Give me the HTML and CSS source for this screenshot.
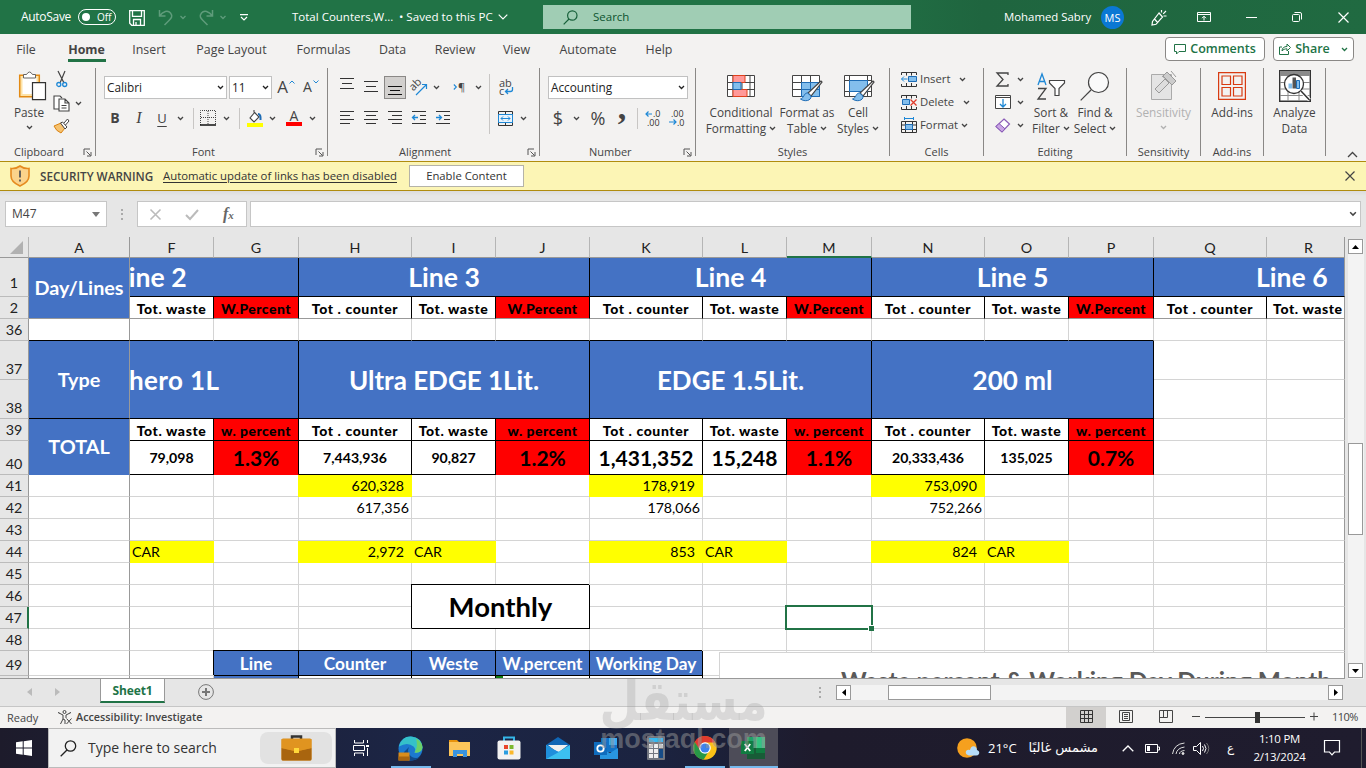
FILE: index.html
```html
<!DOCTYPE html>
<html lang="en">
<head>
    <meta charset="UTF-8">
    <meta name="viewport" content="width=device-width, initial-scale=1.0">
    <title>Total Counters - Excel</title>
    <link rel="stylesheet" href="styles.css">
</head>
<body>

<!-- shared icons -->
<svg class="defs" width="0" height="0">
    <symbol id="chev" viewBox="0 0 7 5"><path d="M1 1l2.500 2.500L6 1" fill="none" stroke="currentColor" stroke-width="1.300"/></symbol>
    <symbol id="launch" viewBox="0 0 9 9"><path d="M1 7V1h6M3.500 3.500l4 4M8 4v4H4" fill="none" stroke="#555" stroke-width="1"/></symbol>
    <symbol id="brush" viewBox="0 0 24 22"><path d="M22 1L9 13l3 3L23 2z" fill="#fff" stroke="#444" stroke-width="1.200"/><path d="M8.500 13c-4 0-3 5-7 6 4 3 11 2 10.500-3z" fill="#83beec" stroke="#1e6cb5"/></symbol>
</svg>

<header class="titlebar">
    <span class="autosave">AutoSave</span>
    <span class="toggle"><i></i>Off</span>
    <svg class="save" width="16" height="17" viewBox="0 0 16 17" fill="none" stroke="#fff" stroke-width="1.300"><path d="M.7 1.700h14.600v14.600H2.700l-2-2zM3.500 1.700v5.600h9V1.700M4.500 16v-5.500h7V16M7 16v-3"/></svg>
    <svg class="undo" width="16" height="17" viewBox="0 0 16 17" fill="none" stroke="#5f9c7b" stroke-width="1.500"><path d="M1.500 1v6h6M1.500 7C5 2 10 .8 12.500 4s1 5-1.500 7.500L6.500 16"/></svg>
    <svg class="dim" width="8" height="5"><use href="#chev"/></svg>
    <svg class="redo" width="16" height="17" viewBox="0 0 16 17" fill="none" stroke="#5f9c7b" stroke-width="1.500"><path d="M14.500 1v6h-6M14.500 7C11 2 6 .8 3.500 4s-1 5 1.500 7.500L9.500 16"/></svg>
    <svg class="dim" width="8" height="5"><use href="#chev"/></svg>
    <svg class="qat" width="8" height="7" viewBox="0 0 8 7" fill="none" stroke="#fff" stroke-width="1.200"><path d="M0 .7h8M1 3l3 3 3-3"/></svg>
    <span class="doc">Total Counters,W...</span>
    <span class="saved">• Saved to this PC</span>
    <svg class="docchev" width="10" height="6" viewBox="0 0 10 6"><path d="M.7 .7L5 5 9.300 .7" fill="none" stroke="#fff" stroke-width="1.200"/></svg>
    <div class="search">
        <svg width="15" height="15" viewBox="0 0 15 15" fill="none" stroke="#17603a" stroke-width="1.200"><circle cx="9.300" cy="5.500" r="4.700"/><path d="M6 9L.7 14.300"/></svg>
        <span>Search</span>
    </div>
    <div class="account">
        <span class="user">Mohamed Sabry</span>
        <span class="avatar">MS</span>
        <svg class="pen" width="16" height="17" viewBox="0 0 16 17" fill="none" stroke="#fff" stroke-width="1.200"><path d="M8 4L1.500 12.500 1 16l4-.7L11.500 8zM3.500 10l3.500 4M8 4l3.500 4M10.500 3.500V1M12.200 4.800L15 2M12.500 7H15.500"/></svg>
        <svg class="disp" width="14" height="12" viewBox="0 0 14 12" fill="none" stroke="#fff"><path d="M.5 1.500h13v9H.5zM.5 3.500h13M7 9.500v-4M5 7.200l2-2 2 2"/></svg>
        <svg class="min" width="11" height="11"><path d="M0 5.500h11" stroke="#fff"/></svg>
        <svg class="max" width="10" height="10" fill="none" stroke="#fff"><rect x=".5" y="2.500" width="7" height="7" rx="1"/><path d="M2.500 .5H8q1.500 0 1.500 1.500v5.500"/></svg>
        <svg class="cls" width="11" height="11"><path d="M.5 .5l10 10M10.500 .5l-10 10" stroke="#fff" stroke-width="1.200"/></svg>
    </div>
</header>

<nav class="tabs">
    <a>File</a><a class="on">Home</a><a>Insert</a><a>Page Layout</a><a>Formulas</a><a>Data</a><a>Review</a><a>View</a><a>Automate</a><a>Help</a>
    <div class="tab-actions">
        <button><svg width="12" height="11" viewBox="0 0 12 11" fill="none" stroke="#217346"><path d="M.5 .5h11v7H5l-2.500 2.500V7.500h-2z"/></svg>Comments</button>
        <button class="share"><svg width="12" height="12" viewBox="0 0 12 12" fill="none" stroke="#217346"><path d="M3 4H.5v7.500h9V8M3 8c0-3 2-4.500 5-4.500V1l3.500 3.500L8 8V5.800C6 5.800 4 6.500 3 8z"/></svg>Share<svg class="c" width="7" height="5"><use href="#chev"/></svg></button>
    </div>
</nav>

<section class="ribbon">
    <div class="group clipboard">
        <div class="gbody">
            <div class="big paste">
                <svg width="30" height="31" viewBox="0 0 30 31"><path d="M3.700 5.200h19.600v21.600H3.700z" fill="#fde3a8" stroke="#e38a13" stroke-width="1.500"/><path d="M6.500 8h14v16h-14z" fill="#fff"/><path d="M7.500 8V4.500h3q3-5 6 0h3V8z" fill="#fff" stroke="#666"/><path d="M16.500 12.600h13v17h-13z" fill="#fff" stroke="#333" stroke-width="1.200"/></svg>
                <span>Paste</span>
                <svg width="7" height="5"><use href="#chev"/></svg>
            </div>
            <div class="clipcol">
                <svg width="12" height="17" viewBox="0 0 12 17" fill="none"><path d="M2 0l6 12M9 0L4 12" stroke="#444" stroke-width="1.200"/><circle cx="2.800" cy="13.500" r="2" stroke="#1e88d6" stroke-width="1.300"/><circle cx="8.700" cy="13.500" r="2" stroke="#1e88d6" stroke-width="1.300"/></svg>
                <div class="copy"><svg width="17" height="17" viewBox="0 0 17 17" fill="#fff" stroke="#444" stroke-width="1.100"><path d="M6 14H1V1h6l2 2"/><path d="M6 4h6l4 4v8H6zM12 4v4h4M8.500 10.500h5M8.500 13h5"/></svg><svg width="7" height="5"><use href="#chev"/></svg></div>
                <svg width="17" height="16" viewBox="0 0 17 16"><path d="M1 8l7-3 4 5-4 5q-5-2-7-7z" fill="#f6c26f" stroke="#d98212"/><path d="M7.500 5l2-1 4.500 5-2 2zM11 5l3.500-4L16 3l-3.500 4" fill="#fff" stroke="#444"/></svg>
            </div>
        </div>
        <div class="glabel">Clipboard<svg width="9" height="9"><use href="#launch"/></svg></div>
    </div>

    <div class="group font">
        <div class="gbody rows">
            <div class="row">
                <div class="combo name">Calibri<svg width="7" height="5"><use href="#chev"/></svg></div>
                <div class="combo size">11<svg width="7" height="5"><use href="#chev"/></svg></div>
                <span class="i w28"><b class="grow">A</b><svg class="sup" width="6" height="4" viewBox="0 0 6 4"><path d="M.5 3.500L3 1l2.500 2.500" fill="none" stroke="#1e88d6"/></svg></span>
                <span class="i w22"><b class="shrink">A</b><svg class="sup" width="6" height="4" viewBox="0 0 6 4"><path d="M.5 .5L3 3 5.500 .5" fill="none" stroke="#1e88d6"/></svg></span>
            </div>
            <div class="row">
                <span class="i w22 bold">B</span><span class="i w26 ital">I</span><span class="i w20 und">U</span>
                <span class="i w16"><svg width="7" height="5"><use href="#chev"/></svg></span>
                <span class="i w10"><em class="vs"></em></span>
                <span class="i w20"><svg width="16" height="16" viewBox="0 0 16 16"><path d="M.5 15V.5h15V15M8 1v14M1 7.500h14" stroke="#444" fill="none" stroke-dasharray="1 1"/><path d="M0 15h16" stroke="#111" stroke-width="1.500"/></svg></span>
                <span class="i w16"><svg width="7" height="5"><use href="#chev"/></svg></span>
                <span class="i w10"><em class="vs"></em></span>
                <span class="i w21"><svg width="16" height="17" viewBox="0 0 16 17"><path d="M8 2L3 8l4 4 5-5-5-5V0" fill="#fff" stroke="#444" stroke-width="1.100"/><path d="M11 4q3 0 2.500 6" stroke="#1e6cb5" stroke-width="2" fill="none"/><path d="M0 13h16v4H0z" fill="#ff0"/></svg></span>
                <span class="i w14"><svg width="7" height="5"><use href="#chev"/></svg></span>
                <span class="i w30 fcol">A<s></s></span>
                <span class="i w6"><svg width="7" height="5"><use href="#chev"/></svg></span>
            </div>
        </div>
        <div class="glabel">Font<svg width="9" height="9"><use href="#launch"/></svg></div>
    </div>

    <div class="group align">
        <div class="gbody">
            <div class="rows">
                <div class="row">
                    <span class="i w24 high"><svg width="14" height="12" stroke="#333"><path d="M0 .5h14M2 5.500h10M0 10.500h14"/></svg></span>
                    <span class="i w24"><svg width="14" height="12" stroke="#333"><path d="M0 .5h14M2 5.500h10M0 10.500h14"/></svg></span>
                    <span class="i w24"><span class="pressed"><svg width="14" height="12" stroke="#111"><path d="M0 1.500h14M2 5.500h10M0 9.500h14"/></svg></span></span>
                    <span class="i w24"><svg width="18" height="17" viewBox="0 0 18 17"><text x="1" y="11" font-size="11" fill="#444" transform="rotate(-45 4 9)">ab</text><path d="M6 16L16.500 5.500M16.500 10V5.500H12" stroke="#1e88d6" stroke-width="1.200" fill="none"/></svg></span>
                    <span class="i w10"><svg width="7" height="5"><use href="#chev"/></svg></span>
                    <span class="i w32 pil"><svg width="5" height="8" viewBox="0 0 6 8"><path d="M1 1l3 3-3 3" fill="none" stroke="#1e88d6" stroke-width="1.300"/></svg>¶</span>
                    <span class="i w10"><svg width="7" height="5"><use href="#chev"/></svg></span>
                </div>
                <div class="row">
                    <span class="i w24"><svg width="14" height="14" stroke="#333"><path d="M0 .5h14M0 4.500h10M0 8.500h14M0 12.500h10"/></svg></span>
                    <span class="i w24"><svg width="14" height="14" stroke="#333"><path d="M0 .5h14M2 4.500h10M0 8.500h14M2 12.500h10"/></svg></span>
                    <span class="i w24"><svg width="14" height="14" stroke="#333"><path d="M0 .5h14M4 4.500h10M0 8.500h14M4 12.500h10"/></svg></span>
                    <span class="i w24"><svg width="14" height="14" stroke="#333" fill="none"><path d="M0 .5h14M8 4.500h6M8 8.500h6M0 12.500h14"/><path d="M6 6.500H.5M3 4L.5 6.500 3 9" stroke="#1e88d6" stroke-width="1.300"/></svg></span>
                    <span class="i w24"><svg width="14" height="14" stroke="#333" fill="none"><path d="M0 .5h14M8 4.500h6M8 8.500h6M0 12.500h14"/><path d="M0 6.500h5.500M3 4l2.500 2.500L3 9" stroke="#1e88d6" stroke-width="1.300"/></svg></span>
                </div>
            </div>
            <em class="vs tall"></em>
            <div class="rows">
                <div class="row"><span class="i w32"><svg width="15" height="17" viewBox="0 0 15 17"><text x="0" y="8" font-size="11" fill="#444">ab</text><text x="0" y="16" font-size="11" fill="#444">c</text><path d="M13.500 8v2.500q0 2-2 2H6.500M9 10l-2.500 2.500L9 15" stroke="#1e88d6" stroke-width="1.300" fill="none"/></svg></span></div>
                <div class="row"><span class="i w30"><svg width="15" height="15" viewBox="0 0 15 15" fill="none" stroke="#333"><path d="M.5 .5h14v14H.5zM7.500 .5v14"/><path d="M.5 3.500h14v8H.5z" fill="#e8f3fc" stroke="#1e88d6"/><path d="M3 7.500h9M5 5.500l-2 2 2 2M10 5.500l2 2-2 2" stroke="#1e88d6"/></svg></span><span class="i w6"><svg width="7" height="5"><use href="#chev"/></svg></span></div>
            </div>
        </div>
        <div class="glabel">Alignment<svg width="9" height="9"><use href="#launch"/></svg></div>
    </div>

    <div class="group number">
        <div class="gbody rows">
            <div class="row"><div class="combo acc">Accounting<svg width="7" height="5"><use href="#chev"/></svg></div></div>
            <div class="row">
                <span class="i w20 big1">$</span><span class="i w16"><svg width="7" height="5"><use href="#chev"/></svg></span>
                <span class="i w28 big1">%</span><span class="i w20 comma">,</span><span class="i w10"><em class="vs"></em></span>
                <span class="i w24 dec"><svg width="16" height="16" viewBox="0 0 16 16"><text x="8" y="7" font-size="9" fill="#333">.0</text><text x="2" y="15.500" font-size="9" fill="#333">.00</text><path d="M7 4H1M3.500 1.500L1 4l2.500 2.500" stroke="#1e88d6" stroke-width="1.200" fill="none"/></svg></span>
                <span class="i w24 dec"><svg width="16" height="16" viewBox="0 0 16 16"><text x="2" y="7" font-size="9" fill="#333">.00</text><text x="8" y="15.500" font-size="9" fill="#333">.0</text><path d="M0 12h7M4.500 9.500L7 12l-2.500 2.500" stroke="#1e88d6" stroke-width="1.200" fill="none"/></svg></span>
            </div>
        </div>
        <div class="glabel">Number<svg width="9" height="9"><use href="#launch"/></svg></div>
    </div>

    <div class="group styles">
        <div class="gbody">
            <div class="big w90"><svg width="28" height="26" viewBox="0 0 28 26"><path d="M.5 3.500h27v21H.5zM.5 10.500h27M.5 17.500h27M6 3.500v21M15 3.500v21M23 3.500v21" fill="#fff" stroke="#444"/><path d="M6 3.500h12v7H6zM6 17.500h14v7H6z" fill="#f99" stroke="#e0401c"/><path d="M6 10.500h8v7H6z" fill="#83beec" stroke="#1e6cb5"/></svg><span>Conditional<br>Formatting <svg width="7" height="5"><use href="#chev"/></svg></span></div>
            <div class="big w42"><svg width="32" height="30" viewBox="0 0 32 30"><path d="M1.500 4.500h27v21h-27zM1.500 11.500h27M1.500 18.500h27M10.500 4.500v21M19.500 4.500v21" fill="#fff" stroke="#444"/><path d="M10.500 11.500h18v14h-18z" fill="#83beec" stroke="#1e6cb5"/><path d="M19.500 11.500v14M10.500 18.500h18" stroke="#1e6cb5"/><use href="#brush" x="8" y="9" width="24" height="22"/></svg><span>Format as<br>Table <svg width="7" height="5"><use href="#chev"/></svg></span></div>
            <div class="big w60"><svg width="32" height="30" viewBox="0 0 32 30"><path d="M1.500 4.500h27v21h-27zM1.500 9.500h27M6.500 4.500v21M24.500 4.500v21M1.500 20.500h27" fill="#fff" stroke="#444"/><path d="M6.500 9.500h18v11h-18z" fill="#83beec" stroke="#1e6cb5"/><use href="#brush" x="8" y="9" width="24" height="22"/></svg><span>Cell<br>Styles <svg width="7" height="5"><use href="#chev"/></svg></span></div>
        </div>
        <div class="glabel">Styles</div>
    </div>

    <div class="group cells">
        <div class="gbody cellcol">
            <div><svg width="16" height="15" viewBox="0 0 16 15" fill="none" stroke="#333"><path d="M.5 3V.5h15V3M.5 12v2.500h15V12M5.500 .5v3M10.500 .5v3M5.500 11v3.500M10.500 11v3.500"/><path d="M7.500 4.500h8v5h-8z" fill="#83beec" stroke="#1e6cb5"/><path d="M6.500 7H.5M3 4.500L.5 7 3 9.500" stroke="#1e88d6"/></svg><span>Insert</span><svg width="7" height="5"><use href="#chev"/></svg></div>
            <div><svg width="16" height="15" viewBox="0 0 16 15" fill="none" stroke="#333"><path d="M.5 3V.5h15V3M.5 12v2.500h15V12M5.500 .5v3M10.500 .5v3M5.500 11v3.500M10.500 11v3.500"/><path d="M1.500 4.500h7v5h-7z" fill="#83beec" stroke="#1e6cb5"/><path d="M9.500 4.500l6 6M15.500 4.500l-6 6" stroke="#e03a2a" stroke-width="1.300"/></svg><span>Delete</span><svg width="7" height="5"><use href="#chev"/></svg></div>
            <div><svg width="16" height="16" viewBox="0 0 16 16" fill="none" stroke="#333"><path d="M.5 4.500h15v11H.5zM.5 8h15M.5 12.500h15M4.500 4.500v11M11.500 4.500v11"/><path d="M4.500 7.500h7v5h-7z" fill="#83beec" stroke="#1e6cb5"/><path d="M3.500 1.500h9M3.500 0v3M12.500 0v3" stroke="#1e88d6"/></svg><span>Format</span><svg width="7" height="5"><use href="#chev"/></svg></div>
        </div>
        <div class="glabel">Cells</div>
    </div>

    <div class="group editing">
        <div class="gbody">
            <div class="edcol">
                <div><svg width="15" height="15" viewBox="0 0 15 15" fill="none" stroke="#444" stroke-width="1.300"><path d="M13 3V1H2l6 6.500L2 14h11v-2"/></svg><svg width="7" height="5"><use href="#chev"/></svg></div>
                <div><svg width="16" height="14" viewBox="0 0 16 14" fill="#fff" stroke="#444"><path d="M.5 .5h15v13H.5zM.5 2.500h15"/><path d="M8 4v7.500M5 9l3 3 3-3" stroke="#1e88d6" stroke-width="1.300" fill="none"/></svg><svg width="7" height="5"><use href="#chev"/></svg></div>
                <div><svg width="16" height="15" viewBox="0 0 16 15"><path d="M9 1l5.500 5L7 14 1 8.500z" fill="#fff" stroke="#8a5cb8" stroke-width="1.200"/><path d="M4 5.500l6 5.300L7 14 1 8.500z" fill="#c9a6e4" stroke="#8a5cb8"/></svg><svg width="7" height="5"><use href="#chev"/></svg></div>
            </div>
            <div class="big w42"><svg width="30" height="30" viewBox="0 0 30 30" fill="none"><path d="M2 14L6 3l4 11M3.500 10.500h5" stroke="#1e88d6" stroke-width="1.300"/><path d="M2 17.500h8l-8 10.500h8" stroke="#444" stroke-width="1.300"/><path d="M13.500 9.500h15v2.500l-5.500 5.500v7h-4v-7L13.500 12z" fill="#fff" stroke="#444" stroke-width="1.200"/></svg><span>Sort &amp;<br>Filter <svg width="7" height="5"><use href="#chev"/></svg></span></div>
            <div class="big w46"><svg width="30" height="30" viewBox="0 0 30 30" fill="none" stroke="#444" stroke-width="1.200"><circle cx="18.500" cy="11.500" r="10" fill="#fafafa"/><path d="M11 19L.7 29.300"/></svg><span>Find &amp;<br>Select <svg width="7" height="5"><use href="#chev"/></svg></span></div>
        </div>
        <div class="glabel">Editing</div>
    </div>

    <div class="group sens">
        <div class="gbody"><div class="big full grey"><svg width="28" height="30" viewBox="0 0 28 30"><path d="M1.500 4.500h20v25h-20z" fill="#e4e4e4" stroke="#aaa"/><path d="M5 19L15 9l4 4L9 23z" fill="#ddd" stroke="#999"/><path d="M13 6l4-4 9 9-4 4zM16 9l-4-3M21 1l5 6" fill="#ccc" stroke="#999"/></svg><span>Sensitivity</span><svg width="7" height="5"><use href="#chev"/></svg></div></div>
        <div class="glabel">Sensitivity</div>
    </div>
    <div class="group addins">
        <div class="gbody"><div class="big full"><svg width="28" height="29" viewBox="0 0 28 29" fill="none" stroke="#d83b12" stroke-width="1.200"><path d="M.6 1.600h26.800v26.800H.6zM4 5h8.500v8.500H4zM15.500 5H24v8.500h-8.500zM4 16.500h8.500V25H4zM15.500 16.500H24V25h-8.500z"/></svg><span>Add-ins</span></div></div>
        <div class="glabel">Add-ins</div>
    </div>
    <div class="group analyze">
        <div class="gbody"><div class="big full"><svg width="32" height="32" viewBox="0 0 32 32"><path d="M.7 .7h30.600v30.600H.7z" fill="#fff" stroke="#333" stroke-width="1.400"/><path d="M1 1h30v5H1z" fill="#8a8a8a"/><path d="M1 12.500h30M1 19h30M1 25.500h30M9 6v25M20 6v25" stroke="#888"/><circle cx="15" cy="14" r="9.500" fill="#fff" stroke="#333" stroke-width="1.300"/><path d="M9.500 13.500h3.500v5H9.500z" fill="#83beec"/><path d="M13.500 7.500h3.500v11h-3.500z" fill="#555"/><path d="M17.500 10.500h3v8h-3z" fill="#83beec" stroke="#1e6cb5"/><path d="M22 21l8.500 9" stroke="#fff" stroke-width="3.500"/><path d="M22 21l8.500 9" stroke="#333" stroke-width="1.500"/></svg><span>Analyze<br>Data</span></div></div>
    </div>
    <svg class="collapse" width="11" height="7" viewBox="0 0 11 7"><path d="M1 6l4.500-4.500L10 6" fill="none" stroke="#444" stroke-width="1.300"/></svg>
</section>

<div class="warning">
    <svg width="20" height="22" viewBox="0 0 20 22"><path d="M10 1q4 3 9 2.500V11q0 6-9 10Q1 17 1 11V3.500Q6 4 10 1z" fill="#fbd38b" stroke="#e58a1f" stroke-width="1.600"/><path d="M10 5.500v7M10 14.500v2" stroke="#555" stroke-width="1.800"/></svg>
    <strong>SECURITY WARNING</strong>
    <u>Automatic update of links has been disabled</u>
    <button>Enable Content</button>
    <svg class="x" width="10" height="10"><path d="M.5 .5l9 9M9.500 .5l-9 9" stroke="#444" stroke-width="1.200"/></svg>
</div>

<div class="formula">
    <div class="namebox">M47<svg width="8" height="5"><path d="M0 0h8L4 5z" fill="#777"/></svg></div>
    <svg class="dots" width="3" height="11" fill="#aaa"><path d="M0 0h2v2H0zM0 4h2v2H0zM0 9h2v2H0z"/></svg>
    <div class="fx">
        <svg width="11" height="11"><path d="M.5 .5l10 10M10.500 .5l-10 10" stroke="#bbb" stroke-width="1.600"/></svg>
        <svg width="14" height="11"><path d="M1 6l4 4 8-9" stroke="#bbb" stroke-width="2" fill="none"/></svg>
        <span>f<small>x</small></span>
    </div>
    <div class="finput"><svg width="8" height="6"><use href="#chev"/></svg></div>
</div>

<main class="work">
    <div class="sheet">
        <table>
            <colgroup><col class="c0"><col class="ca"><col class="c84"><col class="c85"><col class="c113"><col class="c84"><col class="c94"><col class="c113"><col class="c84"><col class="c85"><col class="c113"><col class="c84"><col class="c85"><col class="c113"><col class="c78"></colgroup>
            <tr class="head"><th class="corner"><svg width="13" height="13"><path d="M13 0v13H0z" fill="#b1b1b1"/></svg></th><th class="a">A</th><th>F</th><th>G</th><th>H</th><th>I</th><th>J</th><th>K</th><th>L</th><th class="cur">M</th><th>N</th><th>O</th><th>P</th><th>Q</th><th>R</th></tr>
            <tr class="h39 r1st"><th>1</th><td class="a blue f20 frz" rowspan="2">Day/Lines</td><td colspan="2" class="blue f27 cut"><span class="line2">Line 2</span></td><td colspan="3" class="blue f27">Line 3</td><td colspan="3" class="blue f27">Line 4</td><td colspan="3" class="blue f27">Line 5</td><td colspan="2" class="blue f27 line6">Line 6</td></tr>
            <tr class="h22 frzrow"><th>2</th><td class="k">Tot. waste</td><td class="k red">W.Percent</td><td class="k">Tot . counter</td><td class="k">Tot. waste</td><td class="k red">W.Percent</td><td class="k">Tot . counter</td><td class="k">Tot. waste</td><td class="k red">W.Percent</td><td class="k">Tot . counter</td><td class="k">Tot. waste</td><td class="k red">W.Percent</td><td class="k">Tot . counter</td><td class="k cut last">Tot. waste</td></tr>
            <tr class="h22 above"><th>36</th><td class="a"></td><td></td><td></td><td></td><td></td><td></td><td></td><td></td><td></td><td></td><td></td><td></td><td class="n"></td><td class="n"></td></tr>
            <tr class="h39"><th>37</th><td class="a blue f20" rowspan="2">Type</td><td colspan="2" rowspan="2" class="blue f27 cut"><span class="hero">hero 1L</span></td><td colspan="3" rowspan="2" class="blue f27">Ultra EDGE 1Lit.</td><td colspan="3" rowspan="2" class="blue f27">EDGE 1.5Lit.</td><td colspan="3" rowspan="2" class="blue f27">200 ml</td><td></td><td></td></tr>
            <tr class="h39"><th>38</th><td></td><td></td></tr>
            <tr class="h22"><th>39</th><td class="a blue f20 total" rowspan="2">TOTAL</td><td class="k">Tot. waste</td><td class="k red">w. percent</td><td class="k">Tot . counter</td><td class="k">Tot. waste</td><td class="k red">w. percent</td><td class="k">Tot . counter</td><td class="k">Tot. waste</td><td class="k red">w. percent</td><td class="k">Tot . counter</td><td class="k">Tot. waste</td><td class="k red">w. percent</td><td></td><td></td></tr>
            <tr class="h34"><th>40</th><td class="v">79,098</td><td class="p red">1.3%</td><td class="v">7,443,936</td><td class="v">90,827</td><td class="p red">1.2%</td><td class="p">1,431,352</td><td class="p">15,248</td><td class="p red">1.1%</td><td class="v">20,333,436</td><td class="v">135,025</td><td class="p red">0.7%</td><td></td><td></td></tr>
            <tr class="h22"><th>41</th><td class="a"></td><td></td><td></td><td class="y r">620,328</td><td></td><td></td><td class="y r">178,919</td><td></td><td></td><td class="y r">753,090</td><td></td><td></td><td></td><td></td></tr>
            <tr class="h22"><th>42</th><td class="a"></td><td></td><td></td><td class="r r1">617,356</td><td></td><td></td><td class="r r1">178,066</td><td></td><td></td><td class="r r1">752,266</td><td></td><td></td><td></td><td></td></tr>
            <tr class="h22"><th>43</th><td class="a"></td><td></td><td></td><td></td><td></td><td></td><td></td><td></td><td></td><td></td><td></td><td></td><td></td><td></td></tr>
            <tr class="h22"><th>44</th><td class="a"></td><td class="y l first">CAR</td><td></td><td class="y r">2,972</td><td class="y l">CAR</td><td></td><td class="y r">853</td><td class="y l">CAR</td><td></td><td class="y r">824</td><td class="y l">CAR</td><td></td><td></td><td></td></tr>
            <tr class="h22"><th>45</th><td class="a"></td><td></td><td></td><td></td><td></td><td></td><td></td><td></td><td></td><td></td><td></td><td></td><td></td><td></td></tr>
            <tr class="h22"><th>46</th><td class="a"></td><td></td><td></td><td class="m"></td><td class="monthly" colspan="2" rowspan="2">Monthly</td><td></td><td></td><td></td><td></td><td></td><td></td><td></td><td></td></tr>
            <tr class="h22"><th class="currow">47</th><td class="a"></td><td></td><td></td><td class="m"></td><td></td><td></td><td></td><td></td><td></td><td></td><td></td><td></td></tr>
            <tr class="h22"><th>48</th><td class="a"></td><td></td><td></td><td></td><td></td><td></td><td></td><td></td><td></td><td></td><td></td><td></td><td></td><td></td></tr>
            <tr class="h25"><th>49</th><td class="a"></td><td></td><td class="mh">Line</td><td class="mh">Counter</td><td class="mh">Weste</td><td class="mh">W.percent</td><td class="mh">Working Day</td><td></td><td></td><td></td><td></td><td></td><td></td><td></td></tr>
            <tr class="h9"><th></th><td class="a"></td><td></td><td class="blue"></td><td class="m"></td><td class="m"></td><td class="m flag"></td><td class="m"></td><td></td><td></td><td></td><td></td><td></td><td></td><td></td></tr>
        </table>
        <div class="selection"><i></i></div>
        <div class="chart">Waste percent &amp; Working Day During Month</div>
    </div>
    <div class="vscroll">
        <b><svg width="7" height="4"><path d="M0 4h7L3.500 0z"/></svg></b>
        <i></i>
        <b><svg width="7" height="4"><path d="M0 0h7L3.500 4z"/></svg></b>
    </div>
</main>

<div class="sheettabs">
    <svg class="nav1" width="5" height="8"><path d="M5 0v8L0 4z" fill="#bbb"/></svg>
    <svg class="nav2" width="5" height="8"><path d="M0 0v8l5-4z" fill="#bbb"/></svg>
    <span class="tab">Sheet1</span>
    <svg class="plus" width="16" height="16" fill="none" stroke="#777"><circle cx="8" cy="8" r="7.400"/><path d="M4 8h8M8 4v8" stroke-width="2"/></svg>
    <div class="hscroll">
        <svg class="dots" width="3" height="11" fill="#aaa"><path d="M0 0h2v2H0zM0 4h2v2H0zM0 9h2v2H0z"/></svg>
        <b><svg width="4" height="7"><path d="M4 0v7L0 3.500z"/></svg></b>
        <div class="track"><i></i></div>
        <b><svg width="4" height="7"><path d="M0 0v7l4-3.500z"/></svg></b>
    </div>
</div>

<footer class="status">
    <span class="ready">Ready</span>
    <svg width="15" height="15" viewBox="0 0 15 15" fill="none" stroke="#444"><circle cx="6.500" cy="2" r="1.500"/><path d="M1 3l4 2v4l-2.500 5M12 3L8 5v3M1 3.500L.5 2M12.500 2L12 3.500M8.500 8.500l5 5.500M13.500 8.500l-5 5.500M5 9l2 1v4"/></svg>
    <strong>Accessibility: Investigate</strong>
    <div class="views">
        <span class="vw on"><svg width="13" height="13" fill="none" stroke="#333"><path d="M.5 .5h12v12H.5zM.5 4.500h12M.5 8.500h12M4.500 .5v12M8.500 .5v12"/></svg></span>
        <span class="vw"><svg width="14" height="13" fill="none" stroke="#444"><path d="M.5 .5h13v12H.5zM3.500 2.500h7v8h-7zM5 4.500h4M5 6.500h4M5 8.500h4"/></svg></span>
        <span class="vw"><svg width="14" height="13" fill="none" stroke="#444"><path d="M.5 .5h13v12H.5zM.5 7.500h8v-7M4.500 .5v7"/></svg></span>
        <svg class="slider" width="128" height="13" stroke="#444" fill="none"><path d="M0 6.500h8M13 7.500h100M118 6.500h8M122 2.500v8"/><path d="M63 2h5v11h-5z" fill="#333" stroke="none"/></svg>
        <span class="zoom">110%</span>
    </div>
</footer>

<div class="taskbar">
    <svg class="win" width="16" height="16" fill="#fff"><path d="M0 2.300L6.700 1.300V7.500H0zM7.700 1.200L16 0v7.500H7.700zM0 8.500h6.700v6.200L0 13.700zM7.700 8.500H16V16l-8.300-1.200z"/></svg>
    <div class="tsearch">
        <svg width="17" height="17" viewBox="0 0 17 17" fill="none" stroke="#222" stroke-width="1.300"><circle cx="10.500" cy="6" r="5.200"/><path d="M7 10L.7 16.300"/></svg>
        <span>Type here to search</span>
        <div class="case"><svg width="31" height="26" viewBox="0 0 31 26"><path d="M11 4V1.500h9V4" fill="none" stroke="#333" stroke-width="2.500"/><rect x=".5" y="3.500" width="30" height="22" rx="1.500" fill="#d98d1c"/><path d="M.5 13l13 3h4l13-3v11q0 1.500-1.500 1.500h-27Q.5 25.500 .5 24z" fill="#a9650f"/><path d="M.5 4h30v9l-13 3h-4L.5 13z" fill="#e09420"/><path d="M13 13h5v5h-5z" fill="#ffd83a"/></svg></div>
    </div>
    <span class="app tv"><svg width="17" height="16" fill="none" stroke="#fff"><path d="M1.500 0v3h9V0M1.500 16v-3h9v3M.5 5.500h11v5H.5zM14.500 0v3M14.500 8v8"/><path d="M13 5h3v2h-3z" fill="#fff" stroke="none"/></svg></span>
    <span class="app run edge"><svg width="25" height="25" viewBox="0 0 25 25"><circle cx="12.500" cy="12.500" r="12" fill="#1c79cf"/><path d="M1 10Q4 0 13 .5q11 1 11.500 11-1 6-8 5 2-3-1-6-6-5-14.500 0z" fill="#35c1c9"/><path d="M18 2.500q6 3 6.500 9-1 6-8 5 4-6 1.500-14z" fill="#6bd06a"/><path d="M11 11q-3 6 3 10 4 2 8 0-4 4-10 3.500Q5 22 6 16z" fill="#114a8b"/><path d="M.5 16.500h11v8H.5z" fill="#d98d1c"/><path d="M.5 20.500h11v4H.5z" fill="#a9650f"/></svg></span>
    <span class="app"><svg width="22" height="19" viewBox="0 0 22 19"><path d="M0 1h8l2 2H0z" fill="#e8930c"/><path d="M0 3h21v14H0z" fill="#fcc55a"/><path d="M4 18v-7h14v7h-4v-3H8v3z" fill="#3b93dd"/></svg></span>
    <span class="app"><svg width="24" height="24" viewBox="0 0 24 24"><path d="M7 6V1.500h10V6" fill="none" stroke="#35b5e8" stroke-width="2"/><rect x=".5" y="4.500" width="23" height="19" rx="2" fill="#f2f2f2"/><path d="M7 9h4v4H7z" fill="#e8452c"/><path d="M12.500 9h4v4h-4z" fill="#7cb82f"/><path d="M7 14.500h4v4H7z" fill="#2a9de0"/><path d="M12.500 14.500h4v4h-4z" fill="#fbb92b"/></svg></span>
    <span class="app"><svg width="24" height="22" viewBox="0 0 24 22"><path d="M0 8l12-8 12 8v3H0z" fill="#1066b5"/><path d="M2 8h20l-10 8z" fill="#f0f0f0"/><path d="M0 8l24 14H0z" fill="#2aa4e8"/><path d="M24 8v14H0z" fill="#3cc0f0"/><path d="M0 9l13 6L0 22z" fill="#1f8fdc"/></svg></span>
    <span class="app"><svg width="25" height="23" viewBox="0 0 25 23"><path d="M7 1h16v14H7z" fill="#1173c7"/><path d="M15 1h8v7h-8z" fill="#3aaaf0"/><path d="M6 11l10 5 8-5v11H6z" fill="#2996e0"/><path d="M0 5h13v13H0z" fill="#0f6cbd"/><circle cx="6.500" cy="11.500" r="3.200" fill="none" stroke="#fff" stroke-width="1.800"/></svg></span>
    <span class="app"><svg width="18" height="24" viewBox="0 0 18 24"><rect width="18" height="24" rx="1" fill="#737780"/><path d="M2 2h14v4H2z" fill="#36b8f0"/><path d="M2 8h4v4H2zM7 8h4v4H7zM12 8h4v4h-4zM2 13h4v4H2zM7 13h4v4H7zM2 18h4v4H2zM7 18h4v4H7z" fill="#eee"/><path d="M12 13h4v9h-4z" fill="#174c87"/></svg></span>
    <span class="app run"><svg width="24" height="24" viewBox="0 0 24 24"><circle cx="12" cy="12" r="11.700" fill="#fbc116"/><path d="M1.700 6A11.700 11.700 0 0 1 22.300 6.500H12L6.500 14.500z" fill="#e23b2e"/><path d="M1.700 6a11.700 11.700 0 0 0 9 17.600L16.500 14H7z" fill="#279847"/><circle cx="12" cy="12" r="5.800" fill="#fff"/><circle cx="12" cy="12" r="4.600" fill="#3b82ee"/></svg></span>
    <span class="app run excel"><svg width="25" height="22" viewBox="0 0 25 22"><path d="M6 0h18v22H6z" fill="#21a366"/><path d="M15 0h9v11h-9z" fill="#33c481"/><path d="M6 11h18v11H6z" fill="#185c37"/><path d="M15 11h9v5h-9z" fill="#107c41"/><path d="M0 4h13v13H0z" fill="#107c41"/><path d="M3.800 7l5.400 7M9.200 7l-5.400 7" stroke="#fff" stroke-width="1.800"/></svg></span>
    <div class="tray">
        <svg class="sun" width="23" height="21" viewBox="0 0 23 21"><circle cx="10" cy="10" r="9.800" fill="#f5a01e"/><path d="M11 17q-3-1-2-4 2-2 4-1 1-5 5-3.500 2 1 2 3.500 3 1 2 4-1 1.500-3 1.500h-6q-1.500 0-2-.5z" fill="#b5dcf8"/></svg>
        <span class="temp">21°C</span>
        <span class="ar" dir="rtl">مشمس غالبًا</span>
        <svg class="up" width="12" height="7"><path d="M.7 6.300L6 1l5.300 5.300" fill="none" stroke="#fff" stroke-width="1.300"/></svg>
        <svg class="bat" width="15" height="9"><path d="M.5 .5h12v8H.5zM13 3h1.500v3H13" fill="none" stroke="#fff"/><path d="M2 2h3v5H2z" fill="#fff"/></svg>
        <svg class="wifi" width="13" height="13" fill="none" stroke="#ddd"><path d="M.5 12Q2 2 12.500 1M4 12q1-6 8.500-7M7.500 12q0-3 5-3.500"/><circle cx="11" cy="11.500" r="1" fill="#fff"/></svg>
        <svg class="vol" width="16" height="13" fill="none" stroke="#fff"><path d="M.5 4.500h3l4-4v12l-4-4h-3zM9.500 4q2 2.500 0 5M11.500 2.500q3 4 0 8"/><path d="M13.500 1q4.500 5.500 0 11" stroke="#777"/></svg>
        <span class="ain">ع</span>
        <span class="clock">1:10 PM<br>2/13/2024</span>
        <svg class="note" width="16" height="16"><path d="M.5 .5h15v11.500h-5L8 14.800 5.500 12h-5z" fill="none" stroke="#fff" stroke-width="1.200"/></svg>
    </div>
</div>

<div class="watermark"><b lang="ar">مستقل</b><span>mostaql.com</span></div>

</body>
</html>
```
FILE: styles.css
```css
* {
    box-sizing: border-box;
}

body {
    margin: 0;
    width: 1366px;
    height: 768px;
    overflow: hidden;
    position: relative;
    font-family: "Open Sans", "Noto Sans", sans-serif;
    font-size: 12px;
    line-height: 16px;
    color: #444;
    background: #e6e6e6;
    white-space: nowrap;
}

svg {
    flex: none;
    overflow: visible;
}

.defs {
    position: absolute;
}

i, em, s {
    font-style: normal;
    text-decoration: none;
}

button {
    font: inherit;
}

/* title bar */
.titlebar {
    height: 34px;
    display: flex;
    align-items: center;
    background: linear-gradient(90deg, #217346 60%, #1f653f 72%, #206a41 100%);
    color: #fff;
}

.autosave {
    margin-left: 21px;
    width: 57px;
    letter-spacing: -0.3px;
}

.toggle {
    width: 38px;
    height: 16px;
    border: 1.5px solid #fff;
    border-radius: 8px;
    display: flex;
    align-items: center;
    font-size: 10px;
    line-height: 12px;
}

.toggle i {
    width: 8px;
    height: 8px;
    border-radius: 50%;
    background: #fff;
    margin: 0 7px 0 3px;
}

.save { margin-left: 13px; }
.undo { margin-left: 13px; }
.redo { margin-left: 11px; }
.dim { color: #5f9c7b; margin-left: 5px; }
.qat { margin-left: 13px; }
.doc { margin-left: 44px; width: 107px; font-size: 11.5px; }
.saved { font-size: 11.6px; width: 97px; }
.docchev { margin-left: 2px; }

.search {
    width: 368px;
    height: 24px;
    margin-left: 35px;
    background: #a0cdb4;
    color: #0d5430;
    display: flex;
    align-items: center;
    padding-left: 20px;
}

.search span {
    margin-left: 15px;
    font-size: 11.5px;
}

.account {
    display: flex;
    align-items: center;
    margin-left: 93px;
}

.user { width: 97px; font-size: 11.4px; }

.avatar {
    width: 23px;
    height: 23px;
    border-radius: 50%;
    background: #0a78d4;
    text-align: center;
    font-size: 11px;
    line-height: 23px;
}

.pen { margin-left: 27px; }
.disp { margin-left: 30px; }
.min { margin-left: 35px; }
.max { margin-left: 35px; }
.cls { margin-left: 36px; }

/* ribbon tabs */
.tabs {
    height: 34px;
    display: flex;
    background: #f3f2f1;
}

.tabs a {
    width: 60px;
    text-align: center;
    font-size: 12.4px;
    line-height: 31px;
}

.tabs a:nth-child(1) { width: 52px; }
.tabs a:nth-child(2) { width: 69px; }
.tabs a:nth-child(3) { width: 56px; }
.tabs a:nth-child(4) { width: 109px; }
.tabs a:nth-child(5) { width: 75px; }
.tabs a:nth-child(6) { width: 63px; }
.tabs a:nth-child(7) { width: 62px; }
.tabs a:nth-child(8) { width: 61px; }
.tabs a:nth-child(9) { width: 82px; }

.tabs .on {
    font-weight: 700;
    background: linear-gradient(#217346, #217346) center 25px / 38px 3px no-repeat;
}

.tab-actions {
    margin-left: auto;
    display: flex;
    padding: 3px 12px 0 0;
    gap: 8px;
}

.tab-actions button {
    width: 100px;
    height: 24px;
    padding: 0;
    border: 1px solid #8a8886;
    border-radius: 4px;
    background: #fff;
    color: #217346;
    font-weight: 600;
    font-size: 12.5px;
    display: flex;
    align-items: center;
    justify-content: center;
    gap: 4px;
}

.tab-actions .share { width: 81px; }
.share .c { margin-left: 7px; }

/* ribbon */
.ribbon {
    height: 93px;
    display: flex;
    background: #f3f2f1;
}

.group {
    height: 88px;
    border-right: 1px solid #8a8886;
    display: flex;
    flex-direction: column;
    font-size: 11.8px;
}

.clipboard { width: 96px; }
.font { width: 232px; }
.align { width: 212px; }
.number { width: 156px; }
.styles { width: 194px; }
.cells { width: 94px; }
.editing { width: 143px; }
.sens { width: 74px; }
.addins { width: 63px; }
.analyze { width: 62px; }

.gbody {
    height: 78px;
    flex: none;
    display: flex;
}

.glabel {
    height: 12px;
    flex: none;
    text-align: center;
    font-size: 11px;
    display: flex;
    justify-content: center;
    align-items: center;
}

.glabel svg {
    margin: 0 3px 0 auto;
}

.clipboard .glabel { padding-left: 14px; }
.font .glabel { padding-left: 96px; }
.align .glabel { padding-left: 71px; }
.number .glabel { padding-left: 49px; }

.big {
    display: flex;
    flex-direction: column;
    align-items: center;
    text-align: center;
    line-height: 16px;
    padding-top: 3px;
    flex: none;
}

.big > svg:first-child {
    margin-bottom: 3px;
}

.big span svg {
    vertical-align: 2px;
}

.big > span + svg {
    margin-top: 5px;
}

.paste { width: 58px; padding-top: 2px; }
.paste > svg:first-child { margin-left: 3px; }
.w90 { width: 90px; }
.w42 { width: 42px; }
.w46 { width: 46px; }
.w60 { width: 60px; }
.full { width: 100%; }
.grey { color: #b1b1b1; }
.styles .big > svg { height: 26px; width: 28px; margin: 1px 0 6px; }
.styles .w42 > svg, .styles .w60 > svg { height: 30px; width: 32px; margin: 0 0 3px; }
.styles .w60 > svg { margin-left: 2px; }
.editing .big > svg { height: 30px; margin-bottom: 3px; }
.sens .big > svg:first-child { margin-top: -1px; margin-bottom: 4px; }
.addins .big > svg { margin-bottom: 4px; }
.analyze .big { padding-top: 2px; }
.analyze .big > svg { margin-bottom: 2px; }

.clipcol {
    display: flex;
    flex-direction: column;
    padding-top: 3px;
    margin-left: -5px;
    gap: 7px;
}

.clipcol > svg:first-child { margin-left: 3px; }

.copy {
    display: flex;
    align-items: center;
    gap: 5px;
    height: 16px;
}

.rows {
    display: flex;
    flex-direction: column;
    padding: 8px 0 0 8px;
}

.row {
    height: 22px;
    margin-bottom: 9px;
    display: flex;
    align-items: center;
}

.i {
    display: flex;
    align-items: center;
    justify-content: center;
    flex: none;
    height: 22px;
    color: #444;
}

.w6 { width: 6px; }
.w10 { width: 10px; }
.w14 { width: 14px; }
.w16 { width: 16px; }
.w20 { width: 20px; }
.w21 { width: 21px; }
.w22 { width: 22px; }
.w24 { width: 24px; }
.w26 { width: 26px; }
.w28 { width: 28px; }
.w30 { width: 30px; }
.w32 { width: 32px; }

.combo {
    height: 23px;
    flex: none;
    border: 1px solid #c1c1c1;
    background: #fff;
    color: #222;
    display: flex;
    align-items: center;
    padding: 0 2px;
    font-size: 11.8px;
}

.combo svg { margin-left: auto; }
.name { width: 123px; margin-right: 2px; }
.size { width: 43px; }
.acc { width: 140px; }
.grow { font-weight: 400; font-size: 17px; }
.shrink { font-weight: 400; font-size: 14px; }
.sup { margin: -10px 0 0 1px; }
.bold { font-weight: 700; font-size: 14px; }
.ital { font-family: "Liberation Serif", serif; font-style: italic; font-size: 16px; }
.und { text-decoration: underline; font-size: 13px; text-underline-offset: 3px; }

.vs {
    width: 1px;
    height: 21px;
    background: #c8c6c4;
}

.tall {
    height: 60px;
    margin: 6px 0 0 -4px;
}

.fcol {
    flex-direction: column;
    font-size: 14px;
    line-height: 13px;
    padding-bottom: 1px;
}

.fcol s {
    width: 16px;
    height: 4px;
    background: #f00;
}

.high { padding-bottom: 6px; }

.pressed {
    width: 22px;
    height: 23px;
    border: 1px solid #8a8886;
    background: #d2d0ce;
    display: flex;
    justify-content: center;
    padding-top: 8px;
}

.align .rows { width: 165px; padding-left: 7px; }
.align .rows + .tall + .rows { width: auto; padding-left: 0; }
.pil { font-size: 11px; padding-left: 4px; }
.big1 { font-size: 18px; }
.comma { font: 700 34px "Liberation Serif", serif; padding-bottom: 20px; }
.dec { padding-right: 2px; }

.cellcol {
    flex-direction: column;
    padding: 3px 0 0 11px;
    gap: 7px;
}

.cellcol div {
    display: flex;
    align-items: center;
    height: 16px;
    font-size: 11.3px;
}

.cellcol span { margin-left: 3px; width: 39px; }
.cellcol div:nth-child(2) span { width: 43px; }
.cellcol div:last-child span { width: 41px; }

.edcol {
    display: flex;
    flex-direction: column;
    width: 46px;
    padding: 3px 0 0 11px;
    gap: 7px;
}

.edcol div {
    display: flex;
    align-items: center;
    justify-content: space-between;
    width: 29px;
    height: 16px;
}

.collapse { margin: 83px 0 0 21px; }

/* message bar */
.warning {
    height: 30px;
    border-top: 1px solid #b08c0e;
    border-bottom: 1px solid #b08c0e;
    background: #fcf5b5;
    display: flex;
    align-items: center;
    padding: 0 11px 0 10px;
}

.warning strong {
    font-weight: 600;
    font-size: 11.7px;
    margin-left: 10px;
    width: 123px;
}

.warning u {
    width: 246px;
    font-size: 11.35px;
    text-underline-offset: 2px;
    color: #333;
}

.warning button {
    width: 115px;
    height: 22px;
    border: 1px solid #b5b3a8;
    background: #fff;
    padding: 0;
    font-size: 11.3px;
    color: #333;
}

.warning .x { margin-left: auto; }

/* formula bar */
.formula {
    height: 46px;
    padding-top: 10px;
    display: flex;
    align-items: flex-start;
    background: linear-gradient(#dcdcdc, #e6e6e6 5px);
}

.namebox {
    width: 102px;
    height: 26px;
    margin-left: 5px;
    border: 1px solid #c6c6c6;
    background: #fff;
    display: flex;
    align-items: center;
    padding: 0 6px;
}

.namebox svg { margin-left: auto; }
.formula .dots { margin: 8px 13px 0 14px; }

.fx {
    width: 110px;
    height: 26px;
    border: 1px solid #c6c6c6;
    background: #fff;
    display: flex;
    align-items: center;
    padding-left: 12px;
    gap: 24px;
}

.fx span {
    font: italic 700 16px "Liberation Serif", serif;
    color: #666;
}

.fx small { font-size: 11px; }

.finput {
    width: 1111px;
    height: 26px;
    margin-left: 3px;
    border: 1px solid #c6c6c6;
    background: #fff;
    display: flex;
    align-items: center;
    justify-content: flex-end;
    padding-right: 3px;
}

/* worksheet */
.work {
    height: 442px;
    display: flex;
}

.sheet {
    width: 1345px;
    height: 442px;
    position: relative;
    overflow: hidden;
    border-bottom: 1px solid #999;
}

table {
    table-layout: fixed;
    width: 1345px;
    border-collapse: separate;
    border-spacing: 0;
    background: #fff;
    font-family: Lato, sans-serif;
    color: #000;
}

.c0 { width: 29px; }
.ca { width: 101px; }
.c78 { width: 78px; }
.c84 { width: 84px; }
.c85 { width: 85px; }
.c94 { width: 94px; }
.c113 { width: 113px; }

.head { height: 21px; }
.h22 { height: 22px; }
.h25 { height: 25px; }
.h34 { height: 34px; }
.h39 { height: 39px; }
.h9 { height: 9px; }

td, th {
    padding: 0;
    line-height: 1;
    border-right: 1px solid #d4d4d4;
    border-bottom: 1px solid #d4d4d4;
    text-align: center;
    overflow: hidden;
}

td { padding-top: 1px; }

th {
    background: #e6e6e6;
    border-right-color: #999;
    border-bottom-color: #bbb;
    font-weight: 400;
    font-size: 14.3px;
    color: #222;
    vertical-align: bottom;
    padding-bottom: 3px;
}

.r1st th { padding-bottom: 6px; }

.head th {
    border-right-color: #b5b5b5;
    border-bottom-color: #999;
    padding-bottom: 2px;
}

.head th:last-child { padding-left: 6px; }
.head .corner { padding: 0 2px 3px 10px; }
.head .corner svg { display: block; }
.head .cur { border-bottom: 2px solid #217346; padding-bottom: 1px; }
th.currow { border-right: 2px solid #217346; }

td:last-child, .head th:last-child { border-right-color: #999; }
td.a, th.a { border-right-color: #999; }

.blue {
    background: #4472c4;
    color: #fff;
    font-weight: 700;
    border-color: #000;
}

.frz { border-bottom-color: #999; }
.total { border-bottom-color: #4472c4; }
.f20 { font-size: 19.8px; padding-top: 0; }
.f27 { font-size: 26px; padding-top: 1px; }
.r1st .f27 { font-size: 26.6px; }
.cut { text-align: left; }
.line2 { margin-left: -15px; }
.hero { letter-spacing: 0.4px; margin-left: -1px; }
.line6 { text-align: left; padding-left: 102px; }

.k {
    font-weight: 900;
    font-size: 14px;
    border-color: #000;
    letter-spacing: 0.6px;
    padding-top: 2px;
}

.k.red { letter-spacing: 0.45px; }
.last { padding-left: 6px; }
.frzrow td { border-bottom-color: #999; }
.red { background: #f00; }
.above td { border-bottom-color: #000; }
.above .n { border-bottom-color: #d4d4d4; }
.v { font-weight: 700; font-size: 14.1px; border-color: #000; }
.p { font-weight: 700; font-size: 21px; border-color: #000; padding-top: 0; }
.p.red { border-bottom-color: #f00; }

.y {
    background: #ff0;
    border-color: #ff0;
    box-shadow: -1px 0 0 #ff0;
}

.y.first { box-shadow: none; }

.r, .l { font-size: 14.2px; padding-top: 2px; }
.r { text-align: right; padding-right: 7px; }
.r1 { padding-right: 2px; }
.l { text-align: left; padding-left: 2px; }

.monthly {
    border-color: #000;
    font-weight: 700;
    font-size: 27.5px;
    box-shadow: -1px -1px 0 #000;
    padding-top: 0;
}

.mh {
    background: #4472c4;
    color: #fff;
    font-weight: 700;
    font-size: 17.3px;
    border-color: #000;
    box-shadow: -1px -1px 0 #000;
    padding-top: 2px;
}

.m { border-right-color: #000; }
.flag { background: linear-gradient(#107c10, #107c10) 0 0 / 7px 3px no-repeat; }

.selection {
    position: absolute;
    left: 785px;
    top: 368px;
    width: 88px;
    height: 25px;
    border: 2px solid #217346;
}

.selection i {
    position: absolute;
    right: -3px;
    bottom: -3px;
    width: 6px;
    height: 6px;
    background: #217346;
    border: solid #fff;
    border-width: 1px 0 0 1px;
}

.chart {
    position: absolute;
    left: 719px;
    top: 415px;
    width: 626px;
    height: 60px;
    background: #fff;
    border: 1px solid #d4d4d4;
    border-right-color: #999;
    padding: 15px 0 0 121px;
    font: 700 24.5px/26px Lato, sans-serif;
    color: #595959;
}

.vscroll {
    width: 16px;
    height: 440px;
    margin: 2px 0 0 3px;
    background: #f3f3f3;
    display: flex;
    flex-direction: column;
}

.vscroll b, .hscroll b {
    width: 15px;
    height: 15px;
    border: 1px solid #999;
    background: #fff;
    display: flex;
    align-items: center;
    justify-content: center;
}

.vscroll i {
    width: 15px;
    height: 92px;
    margin: 189px 0 128px;
    border: 1px solid #999;
    background: #fff;
}

/* sheet tabs */
.sheettabs {
    height: 28px;
    display: flex;
    background: #e6e6e6;
    border-bottom: 1px solid #c6c6c6;
    align-items: flex-start;
}

.nav1 { margin: 9px 0 0 27px; }
.nav2 { margin: 9px 0 0 23px; }

.tab {
    width: 65px;
    height: 25px;
    margin: -1px 0 0 40px;
    border: 1px solid #999;
    border-width: 0 1px 2px;
    border-bottom-color: #217346;
    background: #fff;
    color: #217346;
    font-weight: 700;
    text-align: center;
    line-height: 26px;
    letter-spacing: -0.1px;
}

.plus { margin: 5px 0 0 33px; }

.hscroll {
    display: flex;
    margin: 6px 23px 0 auto;
}

.hscroll .dots { margin: 2px 14px 0 0; }

.track {
    width: 477px;
    background: #f3f3f3;
}

.track i {
    display: block;
    width: 103px;
    height: 15px;
    margin-left: 37px;
    border: 1px solid #999;
    background: #fff;
}

/* status bar */
.status {
    height: 21px;
    background: #f3f2f1;
    display: flex;
    align-items: center;
    font-size: 11px;
}

.ready { margin: 1px 0 0 7px; width: 51px; }
.status strong { margin: -2px 0 0 3px; font-weight: 600; font-size: 10.8px; }

.views {
    display: flex;
    align-items: center;
    margin-left: auto;
    padding-right: 8px;
}

.vw {
    width: 40px;
    height: 21px;
    display: flex;
    align-items: center;
    justify-content: center;
}

.vw svg { margin-top: -2px; }
.vw.on { background: #d2d0ce; }
.slider { margin: -2px 12px 0 6px; }
.zoom { width: 26px; margin-top: -1px; letter-spacing: -0.5px; }

/* taskbar */
.taskbar {
    height: 40px;
    display: flex;
    align-items: center;
    background: linear-gradient(90deg, #1d1b2b, #1c2545 30%, #1b2340 48%, #1e1b2c 60%, #1f1c2e);
    color: #fff;
}

.win { margin: 0 16px; }

.tsearch {
    width: 288px;
    height: 40px;
    border: 1px solid #bbb;
    background: #f2f2f2;
    color: #333;
    display: flex;
    align-items: center;
    padding-left: 11px;
    font-size: 14px;
}

.tsearch span { margin-left: 11px; width: 172px; }

.case {
    width: 72px;
    height: 32px;
    border-radius: 8px;
    background: #e2e2e2;
    display: flex;
    align-items: center;
    justify-content: center;
}

.app {
    width: 49px;
    height: 40px;
    display: flex;
    align-items: center;
    justify-content: center;
    flex: none;
}

.tv { width: 50px; }

.run {
    background: linear-gradient(#76b9ed, #76b9ed) center bottom / 40px 2px no-repeat;
}

.excel {
    background: linear-gradient(#76b9ed, #76b9ed) center bottom / 48px 2px no-repeat #4d4c58;
}

.tray {
    flex: 1;
    height: 40px;
    display: flex;
    align-items: center;
    padding-left: 179px;
    border-right: 1px solid #555;
    margin-right: 4px;
}

.temp { margin-left: 8px; width: 38px; font-size: 13px; }
.ar { width: 72px; font-size: 13px; font-family: "DejaVu Sans", sans-serif; }
.up { margin-left: 24px; }
.bat { margin-left: 11px; }
.wifi { margin-left: 12px; }
.vol { margin-left: 8px; }
.ain { margin-left: 18px; width: 8px; font-family: "DejaVu Sans", sans-serif; }
.clock { margin-left: 18px; width: 53px; text-align: center; font-size: 11.4px; line-height: 18px; letter-spacing: -0.2px; }
.note { margin-left: 18px; }

/* site mark laid over everything */
.watermark {
    position: absolute;
    left: 601px;
    top: 672px;
    width: 165px;
    height: 90px;
    color: rgba(150, 150, 150, 0.28);
    font-family: "Liberation Sans", sans-serif;
    text-align: center;
    display: flex;
    flex-direction: column;
    align-items: center;
}

.watermark b {
    font: 700 46px/56px "DejaVu Sans", sans-serif;
    height: 53px;
    transform: scaleY(1.2);
}

.watermark span {
    font-weight: 700;
    font-size: 27px;
    line-height: 28px;
    color: rgba(150, 150, 150, 0.5);
}
```
